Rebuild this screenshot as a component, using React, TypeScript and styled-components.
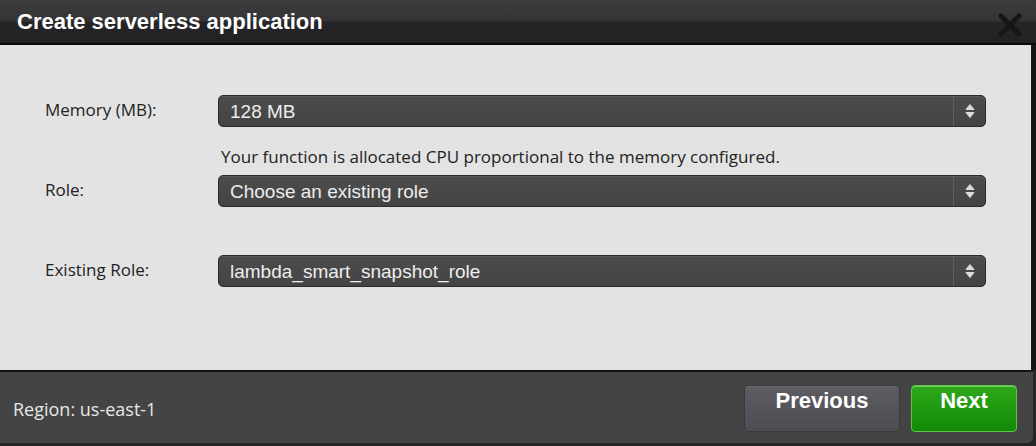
import React from 'react';
import styled, { createGlobalStyle } from 'styled-components';

const GlobalStyle = createGlobalStyle`
  html, body {
    margin: 0;
    padding: 0;
    background: #262626;
    width: 1036px;
    height: 446px;
    overflow: hidden;
  }
`;

const Dialog = styled.div`
  width: 1036px;
  height: 446px;
  display: flex;
  flex-direction: column;
`;

const Header = styled.div`
  height: 43px;
  display: flex;
  align-items: center;
  justify-content: space-between;
  padding: 0 14px 0 17px;
  background: linear-gradient(to bottom, #3c3c3e 0%, #343436 48%, #252527 52%, #222224 100%);
  border-bottom: 2px solid #0a0a0a;
  box-sizing: content-box;
`;

const Title = styled.h1`
  margin: 0;
  font-family: "Liberation Sans", Arial, sans-serif;
  font-weight: bold;
  font-size: 22px;
  color: #ffffff;
`;

const Close = styled.button`
  background: none;
  border: none;
  padding: 0;
  width: 24px;
  height: 24px;
  margin-top: 6px;
  cursor: pointer;
`;

const Body = styled.div`
  flex: 1;
  background: #e3e3e3;
  border-right: 5px solid #151515;
  padding: 50px 0 0 45px;
  display: flex;
  flex-direction: column;
`;

const Row = styled.div`
  display: grid;
  grid-template-columns: 173px 768px;
  align-items: center;
  height: 32px;
`;

const Label = styled.label`
  font-family: "Open Sans", "DejaVu Sans", sans-serif;
  font-size: 17px;
  color: #222;
  margin-top: -3px;
`;

const Help = styled.div`
  height: 48px;
  box-sizing: border-box;
  padding: 18px 0 0 176px;
  font-family: "Open Sans", "DejaVu Sans", sans-serif;
  font-size: 17px;
  color: #222;
  line-height: 24px;
`;

const Spacer = styled.div<{ $h: number }>`
  height: ${(p) => p.$h}px;
`;

const Select = styled.div`
  height: 32px;
  box-sizing: border-box;
  display: flex;
  align-items: stretch;
  border: 1px solid #2a2a2a;
  border-radius: 5px;
  background: linear-gradient(to bottom, #4c4c4c, #444444);
  box-shadow: inset 0 1px 0 #5a5a5a;
`;

const Value = styled.div`
  flex: 1;
  display: flex;
  align-items: center;
  padding: 2px 0 0 11px;
  font-family: "Liberation Sans", Arial, sans-serif;
  font-size: 19px;
  color: #ededed;
`;

const Arrows = styled.div`
  width: 31px;
  border-left: 1px solid #5e5e5e;
  display: flex;
  align-items: center;
  justify-content: center;
`;

const Footer = styled.div`
  height: 71px;
  margin-right: 3px;
  margin-bottom: 3px;
  background: #444444;
  border-top: 2px solid #121212;
  border-bottom-right-radius: 6px;
  display: flex;
  align-items: center;
  justify-content: space-between;
  padding: 0 16px 0 13px;
`;

const Region = styled.span`
  font-family: "Open Sans", "DejaVu Sans", sans-serif;
  font-size: 18px;
  color: #e6e6e6;
  margin-top: 2px;
`;

const Buttons = styled.div`
  display: flex;
  gap: 11px;
  margin-top: 2px;
`;

const Button = styled.button<{ $primary?: boolean }>`
  height: 47px;
  width: ${(p) => (p.$primary ? 106 : 156)}px;
  border-radius: 4px;
  font-family: "Liberation Sans", Arial, sans-serif;
  font-weight: bold;
  font-size: 22px;
  color: #ffffff;
  padding: 0 0 16px;
  border: 1px solid ${(p) => (p.$primary ? '#5fc24a' : '#3a3a3e')};
  background: ${(p) =>
    p.$primary
      ? 'linear-gradient(to bottom, #2ea81a, #128a05)'
      : 'linear-gradient(to bottom, #5c5c62, #4c4c52)'};
  box-shadow: ${(p) => (p.$primary ? 'inset 0 1px 0 #6fd25a' : 'inset 0 1px 0 #6a6a70')};
  cursor: pointer;
`;

const ArrowIcon = () => (
  <svg width="10" height="16" viewBox="0 0 10 16">
    <path d="M5 1.5 L9 6.5 H1 Z" fill="#dcdcdc" stroke="#dcdcdc" strokeWidth="1" strokeLinejoin="round" />
    <path d="M5 14.5 L9 9.5 H1 Z" fill="#dcdcdc" stroke="#dcdcdc" strokeWidth="1" strokeLinejoin="round" />
  </svg>
);

const fields = [
  { label: 'Memory (MB):', value: '128 MB' },
  { label: 'Role:', value: 'Choose an existing role' },
  { label: 'Existing Role:', value: 'lambda_smart_snapshot_role' },
];

const Field = ({ label, value }: { label: string; value: string }) => (
  <Row>
    <Label>{label}</Label>
    <Select>
      <Value>{value}</Value>
      <Arrows>
        <ArrowIcon />
      </Arrows>
    </Select>
  </Row>
);

export default function App() {
  return (
    <>
      <GlobalStyle />
      <Dialog>
        <Header>
          <Title>Create serverless application</Title>
          <Close aria-label="Close">
            <svg width="24" height="24" viewBox="0 0 24 24">
              <path d="M3 3 L21 21 M21 3 L3 21" stroke="#161616" strokeWidth="5" strokeLinecap="round" />
            </svg>
          </Close>
        </Header>
        <Body>
          <Field {...fields[0]} />
          <Help>Your function is allocated CPU proportional to the memory configured.</Help>
          <Field {...fields[1]} />
          <Spacer $h={48} />
          <Field {...fields[2]} />
        </Body>
        <Footer>
          <Region>Region: us-east-1</Region>
          <Buttons>
            <Button>Previous</Button>
            <Button $primary>Next</Button>
          </Buttons>
        </Footer>
      </Dialog>
    </>
  );
}
